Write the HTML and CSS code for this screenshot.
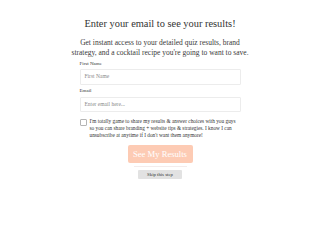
FILE: index.html
```html
<!DOCTYPE html>
<html>
<head>
<meta charset="utf-8">
<link rel="stylesheet" href="styles.css">
</head>
<body>
<div class="page">
  <h1 class="title">Enter your email to see your results!</h1>
  <p class="intro">Get instant access to your detailed quiz results, brand strategy, and a cocktail recipe you're going to want to save.</p>
  <form class="form">
    <label class="label">First Name</label>
    <div class="input">First Name</div>
    <label class="label">Email</label>
    <div class="input">Enter email here...</div>
    <div class="consent">
      <span class="box"></span>
      <span class="consent-text">I'm totally game to share my results &amp; answer choices with you guys so you can share branding + website tips &amp; strategies. I know I can unsubscribe at anytime if I don't want them anymore!</span>
    </div>
    <div class="actions">
      <div class="submit">See My Results</div>
      <div class="rule"></div>
      <div class="skip">Skip this step</div>
    </div>
  </form>
</div>
</body>
</html>
```
FILE: styles.css
```css
html, body {
  margin: 0;
  padding: 0;
  background: #ffffff;
}
.page {
  display: flex;
  flex-direction: column;
  align-items: center;
  font-family: "Liberation Serif", serif;
  color: #333333;
  padding-top: 17px;
}
.title {
  margin: 0;
  font-size: 10.4px;
  line-height: 13px;
  font-weight: normal;
  color: #333333;
}
.intro {
  margin: 8px 0 0;
  width: 180px;
  text-align: center;
  font-size: 7.5px;
  line-height: 9.5px;
  color: #3a3a3a;
}
.form {
  width: 161px;
  display: flex;
  flex-direction: column;
  margin-top: 2.5px;
}
.label {
  font-size: 5px;
  line-height: 7px;
  color: #333333;
  margin-bottom: 2.5px;
}
.input {
  box-sizing: border-box;
  height: 15.5px;
  border: 1px solid #ececec;
  border-radius: 1px;
  font-size: 5.5px;
  line-height: 13.5px;
  padding-left: 4px;
  color: #8a8a8a;
  margin-bottom: 2.5px;
}
.consent {
  display: flex;
  gap: 3px;
  margin-top: 3.5px;
}
.box {
  flex: none;
  box-sizing: border-box;
  width: 7px;
  height: 7px;
  border: 1px solid #b5b5b5;
  border-radius: 1px;
  margin-top: 1px;
}
.consent-text {
  font-size: 5.3px;
  line-height: 7px;
  color: #333333;
}
.actions {
  display: flex;
  flex-direction: column;
  align-items: center;
  margin-top: 6px;
}
.submit {
  width: 65px;
  height: 18px;
  background: #fdcbb4;
  border-radius: 2px;
  color: #ffffff;
  font-size: 8.6px;
  line-height: 18px;
  text-align: center;
}
.rule {
  width: 53px;
  height: 1px;
  background: #f3ecec;
  margin-top: 3px;
}
.skip {
  width: 44px;
  height: 9px;
  margin-top: 3px;
  background: #e2e2e2;
  border-radius: 1px;
  font-size: 4.8px;
  line-height: 9px;
  text-align: center;
  color: #333333;
}
```
